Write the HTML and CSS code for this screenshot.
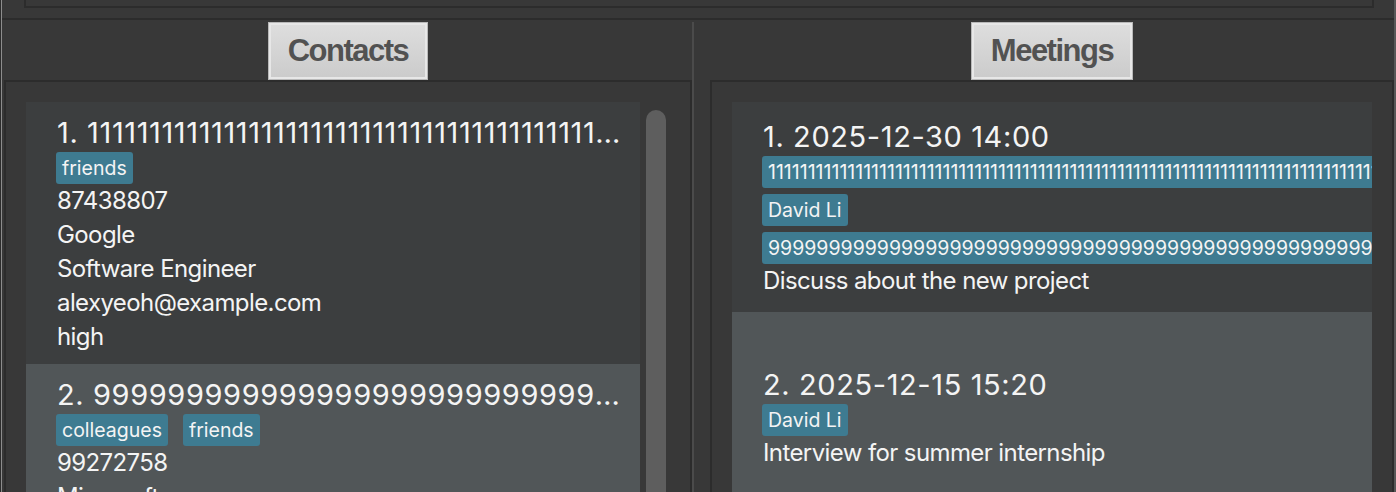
FILE: index.html
```html
<!DOCTYPE html>
<html lang="en">
<head>
<meta charset="utf-8">
<title>Contacts and Meetings</title>
<link rel="stylesheet" href="styles.css">
</head>
<body>
<div class="app">
  <div class="topbar"><div class="topbox"></div></div>
  <div class="panels">
    <section class="panel panel-left">
      <div class="panel-head"><button class="tab">Contacts</button></div>
      <div class="box">
        <div class="list">
          <div class="card contact even">
            <div class="title">1. 11111111111111111111111111111111111111111111111111111111111111</div>
            <div class="tags"><span class="tag">friends</span></div>
            <div class="line">87438807</div>
            <div class="line">Google</div>
            <div class="line">Software Engineer</div>
            <div class="line">alexyeoh@example.com</div>
            <div class="line">high</div>
          </div>
          <div class="card contact odd">
            <div class="title">2. 99999999999999999999999999999999999999999999999999999999999999</div>
            <div class="tags"><span class="tag">colleagues</span><span class="tag">friends</span></div>
            <div class="line">99272758</div>
            <div class="line">Microsoft</div>
            <div class="line">Product Manager</div>
            <div class="line">berniceyu@example.com</div>
            <div class="line">medium</div>
          </div>
        </div>
        <div class="scrollbar"><div class="thumb"></div></div>
      </div>
    </section>
    <div class="divider"></div>
    <section class="panel panel-right">
      <div class="panel-head"><button class="tab">Meetings</button></div>
      <div class="box">
        <div class="list list-wide">
          <div class="card meeting even">
            <div class="title">1. 2025-12-30 14:00</div>
            <span class="tag">111111111111111111111111111111111111111111111111111111111111111111111111111111</span>
            <span class="tag">David Li</span>
            <span class="tag">999999999999999999999999999999999999999999999999999999999999999999999999999999</span>
            <div class="line">Discuss about the new project</div>
          </div>
          <div class="card meeting odd">
            <div class="title">2. 2025-12-15 15:20</div>
            <span class="tag">David Li</span>
            <div class="line">Interview for summer internship</div>
          </div>
        </div>
      </div>
    </section>
  </div>
</div>
</body>
</html>
```

FILE: styles.css
```css
* { box-sizing: border-box; }
html, body { margin: 0; height: 100%; }
body {
  background: #383838;
  font-family: Inter, "Noto Sans", sans-serif;
  color: #f4f4f4;
  overflow: hidden;
}
.app {
  width: 1396px;
  height: 492px;
  display: flex;
  flex-direction: column;
  box-shadow: inset 1px 0 #2c2c2c, inset 2px 0 #8d8d8d, inset -2px 0 #575757;
}
.topbar {
  height: 18px;
  display: flex;
  padding: 0 22px 0 24px;
  flex: none;
}
.topbox {
  flex: 1;
  height: 8px;
  border: 2px solid #2c2c2c;
  border-top: none;
}
.panels {
  flex: 1;
  min-height: 0;
  display: flex;
  margin: 0 2px;
  border-top: 2px solid #2c2c2c;
}
.panel {
  display: flex;
  flex-direction: column;
  min-height: 0;
}
.panel-left { width: 690px; padding-left: 2px; }
.panel-right { flex: 1; padding-left: 16px; }
.divider {
  width: 2px;
  margin-top: 2px;
  background: #4b4b4b;
  flex: none;
}
.panel-head {
  height: 60px;
  padding-top: 2px;
  display: flex;
  justify-content: center;
  align-items: flex-start;
  flex: none;
}
.tab {
  height: 58px;
  padding: 0 19px;
  margin: 0;
  border: 1px solid #b9b9b9;
  box-shadow: inset 0 0 0 2px #e7e7e7;
  background: linear-gradient(#dedede, #cbcbcb);
  color: #525252;
  font-family: "Liberation Sans", Arial, sans-serif;
  font-weight: bold;
  font-size: 31px;
  line-height: 56px;
  letter-spacing: -1.5px;
  cursor: pointer;
}
.box {
  flex: 1;
  min-height: 0;
  display: flex;
  border: 2px solid #2c2c2c;
  border-bottom: none;
  padding: 20px 0 0 20px;
  overflow: hidden;
}
.list {
  width: 614px;
  display: flex;
  flex-direction: column;
  flex: none;
}
.list-wide { width: 640px; }
.scrollbar {
  width: 50px;
  padding: 8px 0 0 6px;
  flex: none;
}
.thumb {
  width: 20px;
  height: 600px;
  background: #5e5e5e;
  border-radius: 10px;
}
.card {
  flex: none;
  overflow: hidden;
}
.even { background: #3c3e3f; }
.odd { background: #515658; }
.contact {
  height: 262px;
  padding: 13.5px 18px 10px 31px;
}
.title {
  font-size: 29px;
  line-height: 34px;
  letter-spacing: 0.6px;
  white-space: nowrap;
  overflow: hidden;
  text-overflow: ellipsis;
}
.tags {
  display: flex;
  gap: 15px;
  margin: 2.5px 0 0 -1px;
}
.tag {
  display: block;
  height: 32px;
  line-height: 32px;
  padding: 0 6px;
  background: #3e7b91;
  border-radius: 3px;
  font-size: 19.5px;
  white-space: nowrap;
  color: #f4f4f4;
}
.line {
  font-size: 24px;
  line-height: 34px;
  letter-spacing: -0.6px;
  white-space: nowrap;
}
.meeting {
  height: 210px;
  padding: 4px 0 0 31px;
  display: flex;
  flex-direction: column;
  justify-content: center;
}
.meeting .tag {
  align-self: flex-start;
  margin: 6px 0 0 -1px;
}
.meeting .title + .tag { margin-top: 2.5px; }
.meeting .line { flex: none; }
```
